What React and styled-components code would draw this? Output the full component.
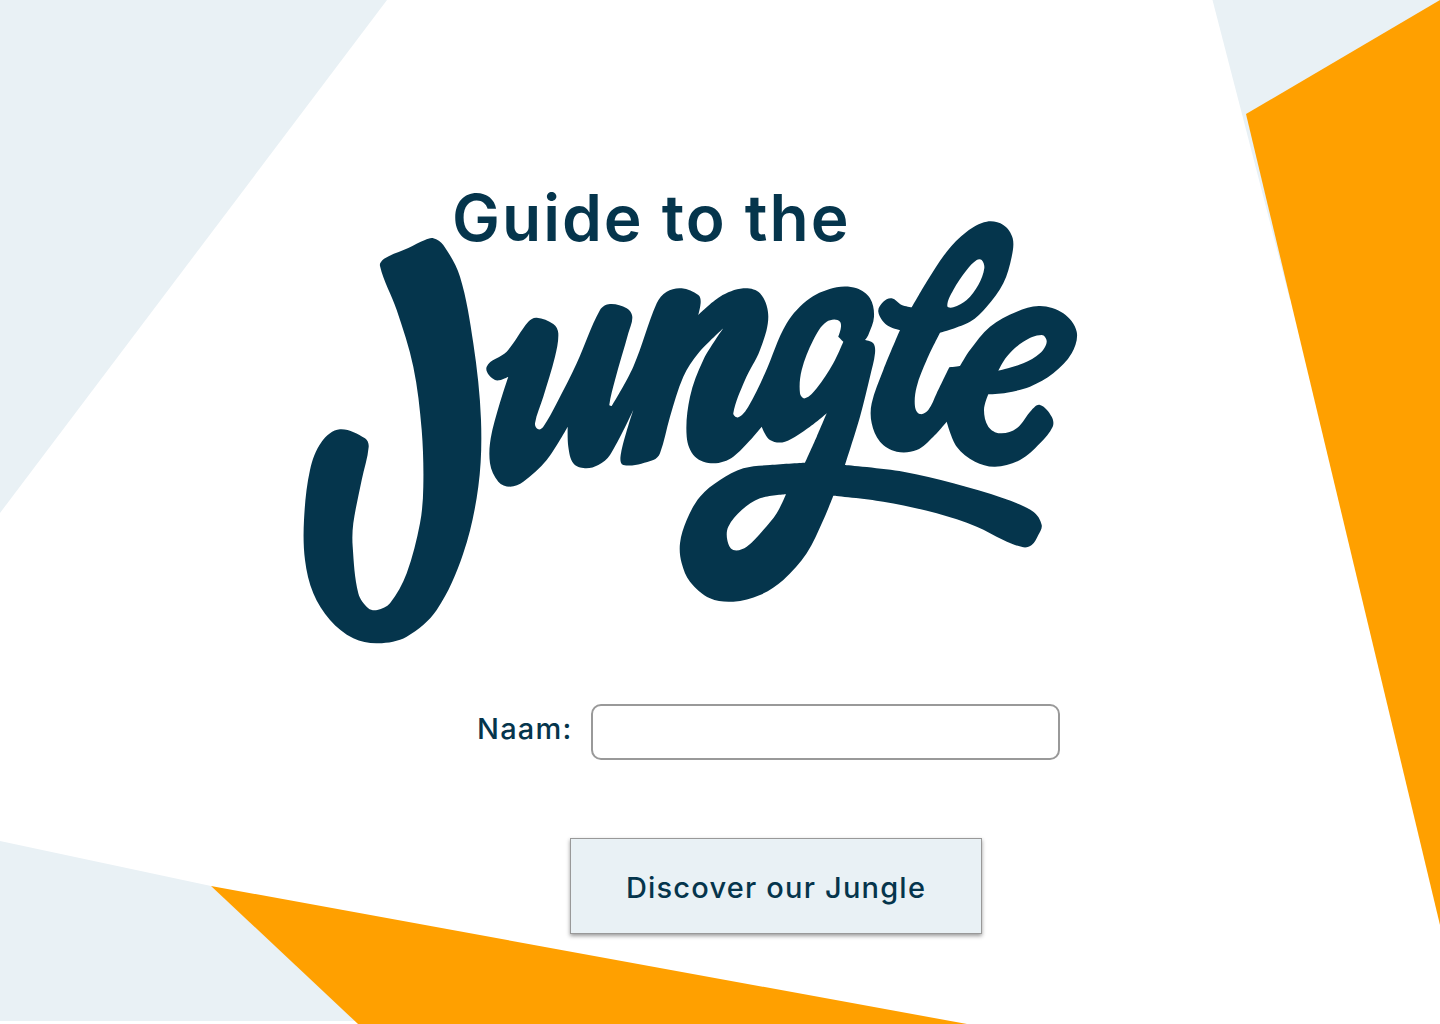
import React from "react";
import styled, { createGlobalStyle } from "styled-components";

const navy = "#05354c";
const mist = "#e9f1f5";
const orange = "#ffa000";

const GlobalStyle = createGlobalStyle`
  html, body {
    margin: 0;
    padding: 0;
    background: #fff;
  }
  body {
    font-family: "Inter", "Liberation Sans", sans-serif;
    color: ${navy};
  }
`;

const Page = styled.main`
  position: relative;
  width: 1440px;
  height: 1024px;
  overflow: hidden;
  background: #fff;
`;

const Backdrop = styled.svg`
  position: absolute;
  inset: 0;
  width: 1440px;
  height: 1024px;
`;

const Content = styled.div`
  position: relative;
  display: flex;
  flex-direction: column;
  align-items: flex-start;
  padding-top: 180px;
`;

const Title = styled.h1`
  margin: 0 0 -38px 452px;
  font-size: 64px;
  line-height: 76px;
  font-weight: 600;
  letter-spacing: 2px;
  white-space: nowrap;
  color: ${navy};
`;

const Logo = styled.svg`
  display: block;
  width: 782px;
  height: 430px;
  margin-left: 300px;
`;

const Field = styled.div`
  display: flex;
  align-items: center;
  gap: 20px;
  margin: 56px 0 0 477px;
`;

const Label = styled.label`
  width: 94px;
  font-size: 29px;
  line-height: 34px;
  font-weight: 500;
  letter-spacing: 1.2px;
  white-space: nowrap;
  margin-top: -6px;
`;

const Input = styled.input`
  box-sizing: border-box;
  width: 469px;
  height: 56px;
  border: 2px solid #999;
  border-radius: 10px;
  background: #fff;
  outline: none;
`;

const Button = styled.button`
  box-sizing: border-box;
  width: 412px;
  height: 96px;
  margin: 78px 0 0 570px;
  padding: 2px 0 0;
  border: 1px solid #999;
  background: ${mist};
  box-shadow: 0 2px 4px rgba(0, 0, 0, 0.4);
  color: ${navy};
  font-family: inherit;
  font-size: 29px;
  font-weight: 500;
  letter-spacing: 1.2px;
  cursor: pointer;
`;

// logo outline is traced from the reference, z1/z2 are the two crop origins
const z1 = (x, y, c) => [290 + x / 3, 170 + y / 3, c];
const z2 = (x, y, c) => [670 + x / 3, 210 + y / 3, c];

const jOutline = [
  [270, 288], [285, 265], [355, 234], [405, 210], [430, 205], [460, 225], [510, 320], [550, 520], [573, 750], [565, 950],
  [520, 1150], [440, 1320], [350, 1400], [265, 1420], [190, 1405], [120, 1350], [70, 1270], [45, 1170], [42, 1050],
  [60, 900], [95, 815], [150, 778], [225, 805], [236, 830], [215, 930], [190, 1060], [188, 1130],
  [205, 1270], [235, 1315], [262, 1320], [300, 1300], [350, 1210], [390, 1060], [400, 950], [395, 780],
  [370, 590], [320, 420],
].map(([x, y]) => z1(x, y));

const ungOutline = [
  z1(590, 590), z1(650, 545), z1(715, 455), z1(740, 443), z1(790, 462), z1(805, 490), z1(795, 560),
  z1(760, 680), z1(735, 760), z1(745, 778), z1(760, 770), z1(800, 700), z1(860, 580), z1(930, 420),
  z1(960, 402), z1(1010, 415), z1(1027, 440), z1(1015, 490), z1(975, 630), z1(958, 705), z1(965, 708, 1),
  z1(1030, 590), z1(1100, 400), z1(1130, 365), z1(1175, 355), z1(1225, 375), z1(1232, 395), z1(1225, 435, 1),
  z2(150, 260), z2(220, 235), z2(270, 250), z2(295, 320), z2(270, 420), z2(225, 510), z2(190, 610), z2(205, 622),
  z2(235, 590), z2(285, 490), z2(350, 340), z2(420, 265), z2(500, 232), z2(560, 235), z2(600, 265), z2(612, 320),
  z2(595, 375), z2(585, 390, 1), z2(610, 400), z2(615, 430), z2(600, 500), z2(570, 620), z2(525, 765, 1),
  z2(700, 785), z2(850, 820), z2(1000, 865), z2(1090, 905), z2(1115, 945), z2(1105, 975), z2(1085, 1005),
  z2(1060, 1012), z2(1000, 990), z2(920, 950), z2(800, 910), z2(640, 875), z2(490, 857, 1), z2(460, 930),
  z2(410, 1030), z2(340, 1110), z2(270, 1155), z2(190, 1175), z2(120, 1165), z2(60, 1115), z2(35, 1060),
  z2(30, 1000), z2(50, 930), z2(90, 860), z2(150, 810), z2(220, 775), z2(300, 765), z2(405, 758, 1),
  z2(440, 680), z2(470, 610, 1), z2(420, 650), z2(345, 695), z2(300, 690), z2(275, 650, 1), z2(190, 740),
  z2(130, 760), z2(75, 740), z2(50, 680), z2(60, 560), z2(100, 450), z2(160, 355, 1), z1(1225, 550), z1(1180, 620),
  z1(1140, 740), z1(1110, 850), z1(1090, 870), z1(1000, 885), z1(993, 850), z1(1030, 720, 1), z1(960, 855),
  z1(925, 885), z1(885, 895), z1(850, 880), z1(835, 830), z1(833, 770, 1), z1(770, 870), z1(700, 935),
  z1(660, 950), z1(625, 935), z1(600, 880), z1(605, 790), z1(655, 620, 1), z1(615, 630),
];

const leOutline = [
  [625, 305], [640, 275], [665, 265], [695, 285], [725, 292, 1], [770, 215], [830, 125], [890, 65],
  [950, 35], [1000, 45], [1028, 85], [1025, 140], [1000, 220], [950, 290], [900, 335], [810, 368, 1],
  [770, 450], [740, 530], [735, 590], [750, 612], [775, 600], [800, 550], [838, 472, 1], [870, 468, 1],
  [900, 420], [960, 350], [1040, 305], [1110, 288], [1180, 310], [1220, 365], [1205, 430], [1150, 490],
  [1080, 530], [1010, 548], [955, 553, 1], [942, 600], [955, 650], [990, 670], [1040, 655], [1085, 600],
  [1110, 585], [1145, 620], [1148, 650], [1110, 700], [1050, 750], [975, 770], [915, 755], [860, 710],
  [830, 635, 1], [790, 680], [740, 720], [680, 725], [630, 695], [605, 640], [605, 580], [640, 480],
  [690, 360, 1], [650, 345],
].map(([x, y, c]) => z2(x, y, c));

const holes = [
  [[510, 335], [470, 335], [430, 390], [395, 480], [390, 550], [405, 565], [440, 535], [490, 460], [520, 395, 1], [505, 380, 1]],
  [[935, 150], [943, 175], [925, 225], [890, 270], [850, 292], [832, 288], [850, 240], [890, 180], [920, 150]],
  [[1115, 375], [1130, 395], [1110, 430], [1060, 460], [985, 482, 1], [1010, 440], [1060, 395]],
  [[348, 853, 1], [270, 865], [215, 900], [175, 950], [172, 990], [190, 1020], [230, 1010], [280, 960], [320, 910]],
].map((hole) => hole.map(([x, y, c]) => z2(x, y, c)));

// handle runs along the neighbours' chord, a third of the segment long
function handle(prev, next, length) {
  const dx = next[0] - prev[0];
  const dy = next[1] - prev[1];
  const size = Math.hypot(dx, dy) || 1;
  return [(dx / size) * length, (dy / size) * length];
}

// closed smooth curve through the points, a third value of 1 keeps a sharp corner
function smoothPath(points) {
  const n = points.length;
  const f = (v) => v.toFixed(1);
  let d = `M${f(points[0][0])} ${f(points[0][1])}`;
  for (let i = 0; i < n; i++) {
    const p0 = points[(i + n - 1) % n];
    const p1 = points[i];
    const p2 = points[(i + 1) % n];
    const p3 = points[(i + 2) % n];
    const third = Math.hypot(p2[0] - p1[0], p2[1] - p1[1]) / 3;
    const h1 = p1[2] ? [0, 0] : handle(p0, p2, third);
    const h2 = p2[2] ? [0, 0] : handle(p1, p3, third);
    d += `C${f(p1[0] + h1[0])} ${f(p1[1] + h1[1])} ${f(p2[0] - h2[0])} ${f(p2[1] - h2[1])} ${f(p2[0])} ${f(p2[1])}`;
  }
  return d + "Z";
}

const logoPath = [jOutline, ungOutline, leOutline, ...holes].map(smoothPath).join("");

export default function App() {
  return (
    <>
      <GlobalStyle />
      <Page>
        <Backdrop viewBox="0 0 1440 1024" aria-hidden="true">
          <polygon fill={mist} points="0,0 387,0 0,513" />
          <polygon fill={mist} points="1212.5,0 1440,0 1290,300" />
          <polygon fill={orange} points="1440,0 1246,114 1440,925" />
          <polygon fill={mist} points="0,841 211,886 358,1021 0,1021" />
          <polygon fill={orange} points="211,886 967,1024 358,1024" />
        </Backdrop>
        <Content>
          <Title>Guide to the</Title>
          <Logo viewBox="300 218 782 430" role="img" aria-label="Jungle">
            <path fill={navy} fillRule="evenodd" d={logoPath} />
          </Logo>
          <Field>
            <Label htmlFor="naam">Naam:</Label>
            <Input id="naam" type="text" />
          </Field>
          <Button type="button">Discover our Jungle</Button>
        </Content>
      </Page>
    </>
  );
}
